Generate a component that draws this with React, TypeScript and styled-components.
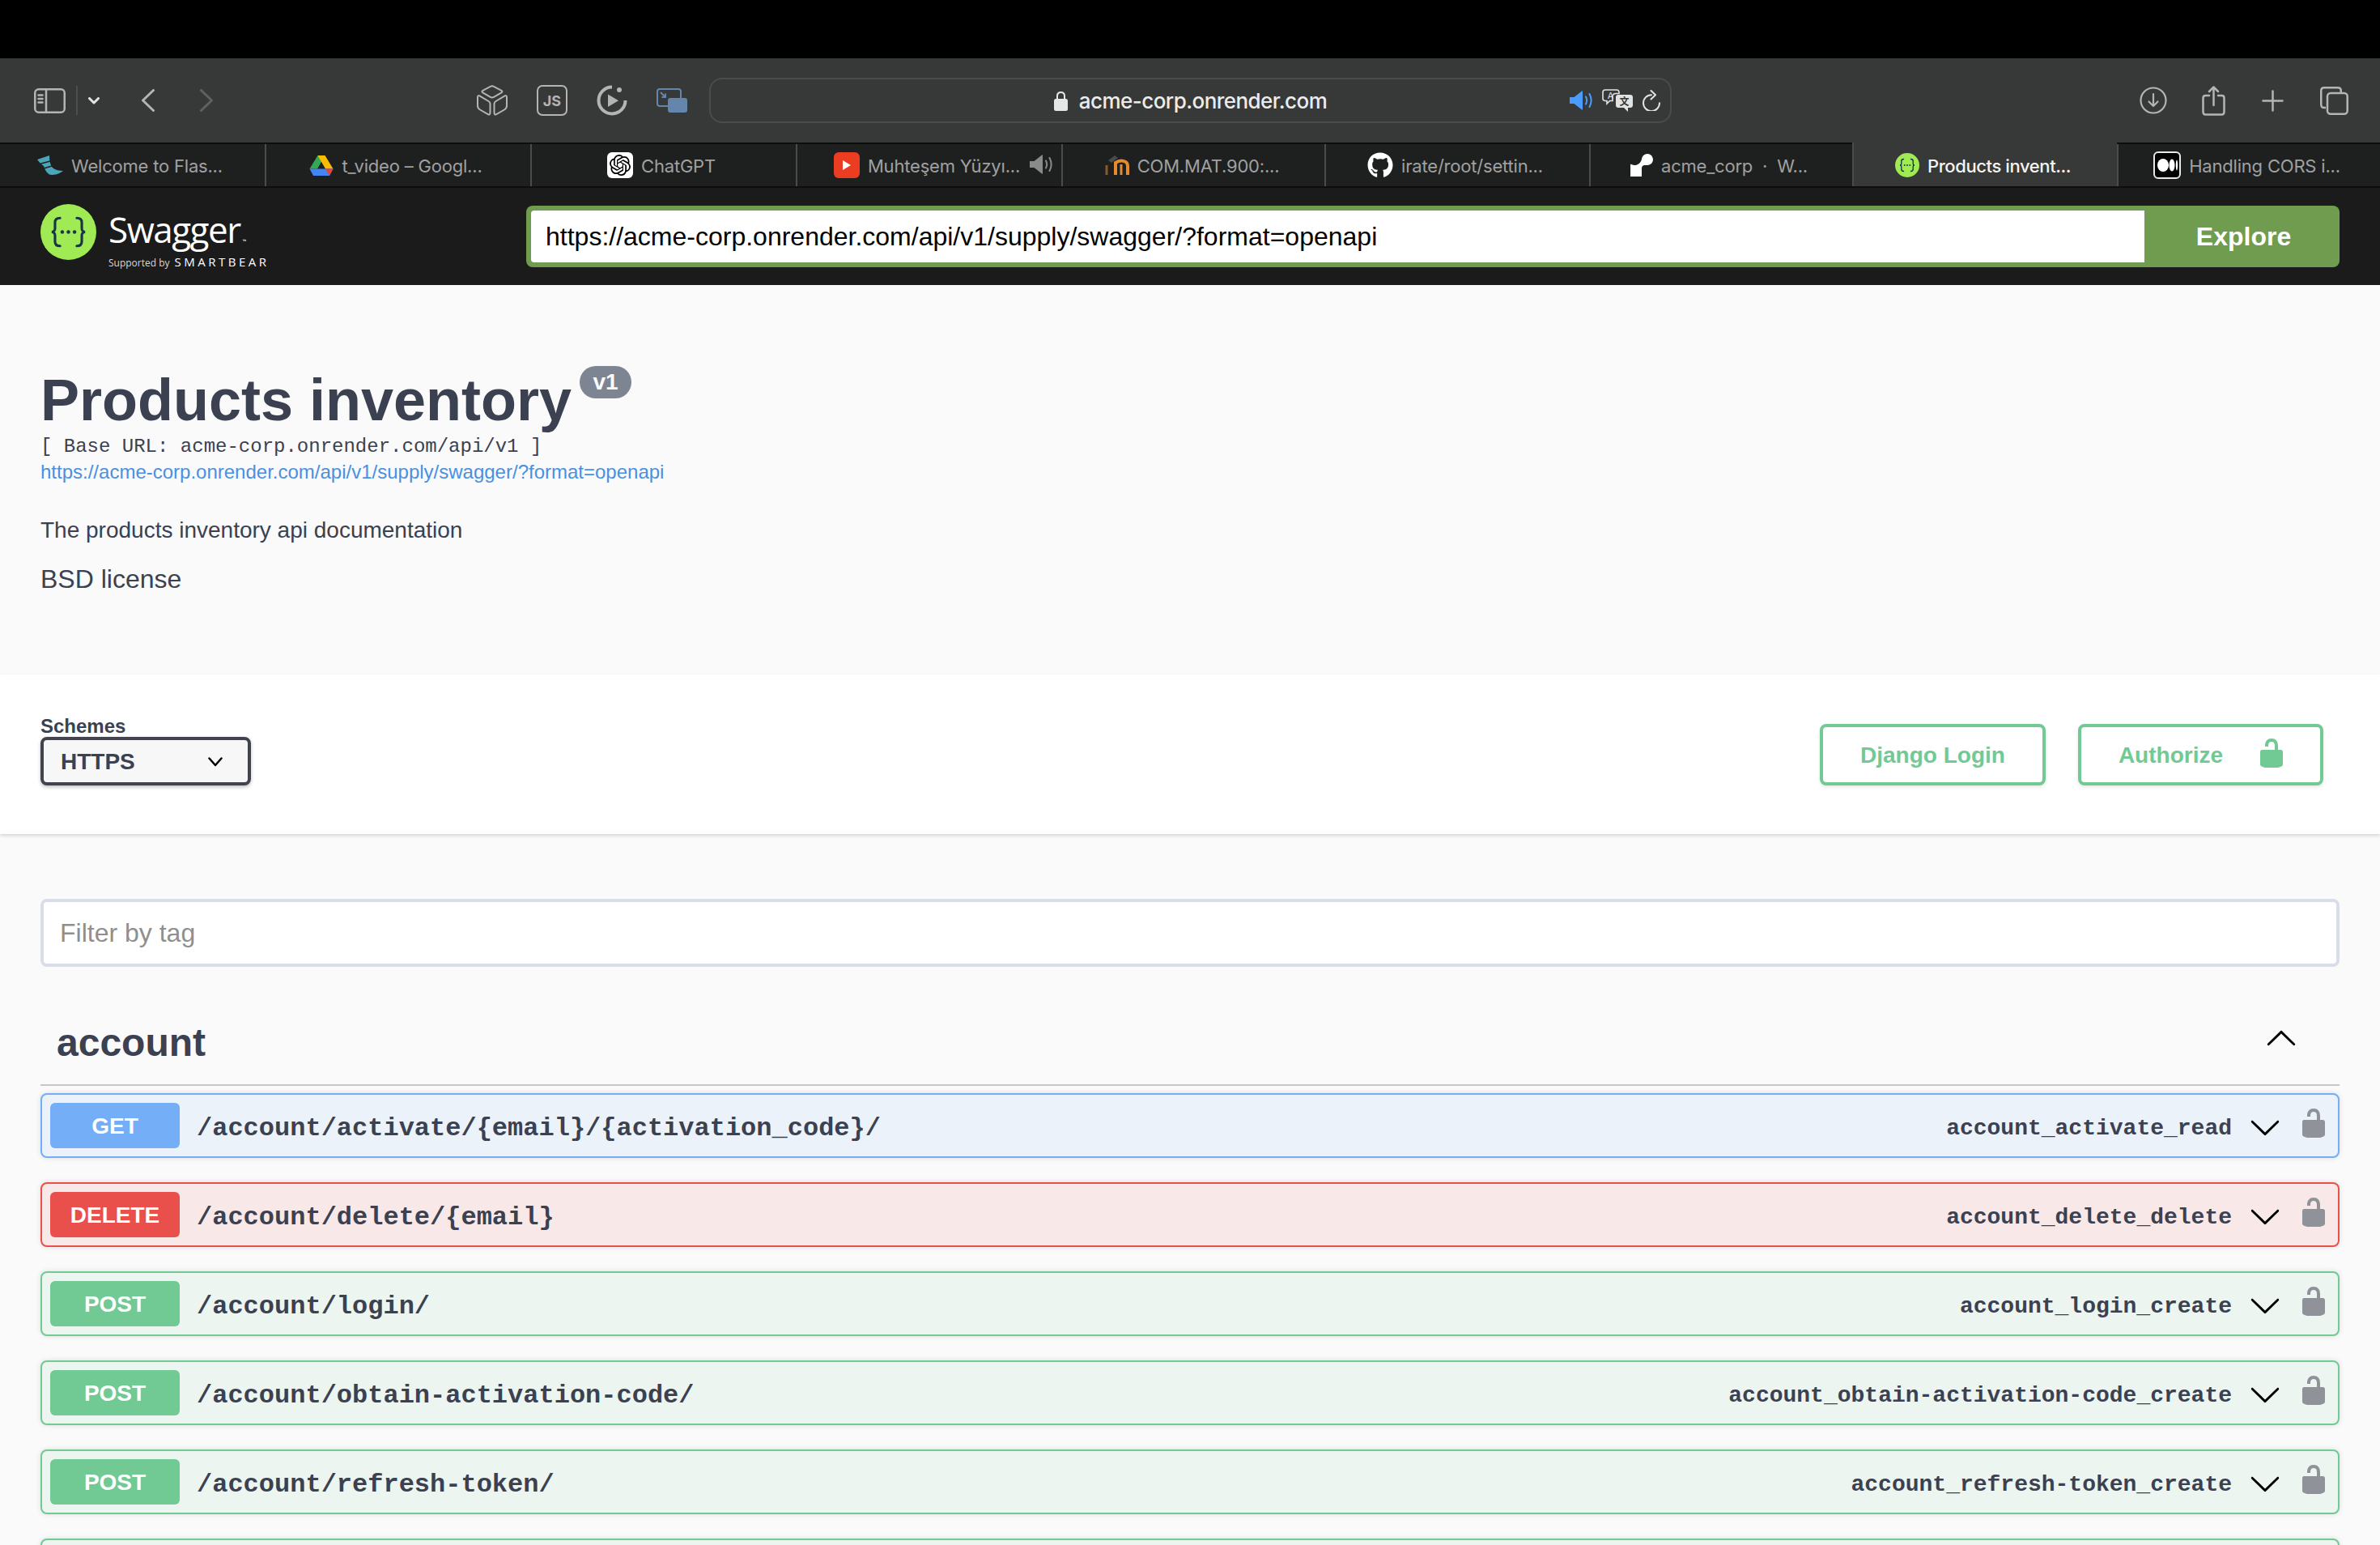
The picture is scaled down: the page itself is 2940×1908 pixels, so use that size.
import React from "react";
import styled, { createGlobalStyle } from "styled-components";
import { FaGithub } from "react-icons/fa";
import { SiOpenai, SiRender } from "react-icons/si";

const GlobalStyle = createGlobalStyle`
  html, body {
    margin: 0;
    padding: 0;
    background: #000;
  }
  * {
    box-sizing: border-box;
  }
`;

const Page = styled.div`
  width: 2940px;
  height: 1908px;
  overflow: hidden;
  display: flex;
  flex-direction: column;
  background: #fafafa;
  font-family: "Liberation Sans", Arial, sans-serif;
  color: #3b4151;
`;

const BlackBar = styled.div`
  height: 72px;
  flex: none;
  background: #000;
`;

const Toolbar = styled.div`
  height: 104px;
  flex: none;
  display: flex;
  align-items: center;
  padding: 0 39px 0 42px;
  background: #373938;
`;

const SideGroup = styled.div`
  display: flex;
  align-items: center;
  svg {
    display: block;
    flex: none;
  }
`;

const ToolDivider = styled.div`
  width: 2px;
  height: 36px;
  margin: 0 13px;
  background: #4d4f4e;
`;

const NavSlot = styled.span<{ $gap: number }>`
  margin-left: ${(p) => p.$gap}px;
`;

const ExtGroup = styled.div`
  display: flex;
  align-items: center;
  gap: 36px;
  margin-left: 326px;
  svg {
    display: block;
    flex: none;
  }
`;

const AddressBar = styled.div`
  width: 1189px;
  height: 56px;
  margin-left: 27px;
  display: grid;
  grid-template-columns: 1fr auto 1fr;
  align-items: center;
  padding: 0 11px;
  border: 2px solid #4a4c4b;
  border-radius: 16px;
`;

const AddressCenter = styled.div`
  grid-column: 2;
  display: flex;
  align-items: center;
  gap: 14px;
  font-family: Inter, "Liberation Sans", sans-serif;
  font-size: 26px;
  font-weight: 500;
  letter-spacing: -0.55px;
  color: #ececec;
`;

const AddressActions = styled.div`
  grid-column: 3;
  justify-self: end;
  display: flex;
  align-items: center;
  gap: 12px;
  svg {
    display: block;
  }
`;

const RightGroup = styled.div`
  margin-left: auto;
  display: flex;
  align-items: center;
  gap: 45px;
  svg {
    display: block;
    flex: none;
  }
  svg:first-child {
    margin-right: -2px;
  }
`;

const TabStrip = styled.div`
  height: 56px;
  flex: none;
  display: flex;
  background: #1e2020;
  border-top: 2px solid #0d0d0d;
  border-bottom: 2px solid #0d0d0d;
`;

const Tab = styled.div<{ $width: number; $active?: boolean }>`
  width: ${(p) => p.$width}px;
  flex: none;
  position: relative;
  display: flex;
  align-items: center;
  justify-content: center;
  gap: 10px;
  margin-top: ${(p) => (p.$active ? "-2px" : "0")};
  padding: ${(p) => (p.$active ? "4px" : "2px")} 6px 0 0;
  background: ${(p) => (p.$active ? "#373938" : "transparent")};
  border-left: 2px solid #4a4c4b;
  color: ${(p) => (p.$active ? "#f4f4f4" : "#a0a0a0")};
  font-family: Inter, "Liberation Sans", sans-serif;
  font-size: 22px;
  letter-spacing: ${(p) => (p.$active ? "-0.4px" : "-0.2px")};
  font-weight: ${(p) => (p.$active ? 500 : 400)};
  white-space: nowrap;
  &:first-child {
    border-left: 0;
  }
  svg {
    display: block;
    flex: none;
    margin-top: -2px;
  }
`;

const TabAudio = styled.span`
  position: absolute;
  right: 11px;
  top: 15px;
`;

const FaviconTile = styled.span<{ $bg: string; $fg: string }>`
  width: 32px;
  height: 32px;
  flex: none;
  display: flex;
  align-items: center;
  justify-content: center;
  margin-top: -2px;
  border-radius: 6px;
  background: ${(p) => p.$bg};
  color: ${(p) => p.$fg};
  svg {
    margin-top: 0;
  }
`;

const SwaggerBar = styled.header`
  height: 120px;
  flex: none;
  display: flex;
  align-items: center;
  padding: 0 50px;
  background: #1b1b1b;
`;

const Brand = styled.div`
  width: 600px;
  flex: none;
  align-self: flex-start;
  padding-top: 20px;
  display: flex;
  align-items: flex-start;
  gap: 15px;
  color: #fff;
  svg {
    display: block;
  }
`;

const BrandText = styled.div`
  display: flex;
  flex-direction: column;
  margin-top: 6px;
`;

const Wordmark = styled.div`
  font-family: "Open Sans", sans-serif;
  font-size: 44px;
  font-weight: 400;
  line-height: 50px;
  letter-spacing: -1.5px;
  sup {
    font-size: 6px;
    letter-spacing: 0;
    vertical-align: 0;
    margin-left: 3px;
  }
`;

const Supported = styled.div`
  display: flex;
  align-items: baseline;
  gap: 6px;
  margin-top: -9px;
  font-family: "Open Sans", sans-serif;
  font-size: 12px;
  line-height: 18px;
  color: #d8d8d8;
  b {
    font-size: 15px;
    font-weight: 500;
    letter-spacing: 3.5px;
    color: #fff;
  }
`;

const ExploreForm = styled.div`
  flex: 1;
  height: 76px;
  display: flex;
  border-radius: 8px;
  overflow: hidden;
  background: #6f9c4e;
`;

const UrlField = styled.div`
  flex: 1;
  margin: 6px 0 6px 6px;
  padding: 0 18px;
  display: flex;
  align-items: center;
  background: #fff;
  color: #000;
  font-size: 32px;
  border-radius: 4px 0 0 4px;
`;

const ExploreButton = styled.div`
  width: 241px;
  padding-left: 4px;
  display: flex;
  align-items: center;
  justify-content: center;
  color: #fff;
  font-size: 32px;
  font-weight: 700;
`;

const InfoSection = styled.section`
  height: 481px;
  flex: none;
  padding: 100px 50px 0;
`;

const TitleRow = styled.div`
  display: flex;
  align-items: flex-start;
  height: 80px;
`;

const Title = styled.h1`
  margin: 2px 0 0;
  font-size: 72px;
  line-height: 80px;
  font-weight: 700;
  color: #3b4151;
`;

const VersionBadge = styled.span`
  width: 64px;
  height: 40px;
  margin-left: 10px;
  display: flex;
  align-items: center;
  justify-content: center;
  border-radius: 20px;
  background: #7d8492;
  color: #fafafa;
  font-size: 28px;
  font-weight: 700;
`;

const BaseUrl = styled.div`
  margin-top: 4px;
  font-family: "Liberation Mono", monospace;
  font-size: 24px;
  line-height: 32px;
  color: #3b4151;
`;

const SpecLink = styled.div`
  margin-top: -1px;
  font-size: 24px;
  line-height: 31px;
  color: #4990e2;
`;

const Description = styled.p`
  margin: 37px 0 0;
  font-size: 28px;
  line-height: 40px;
`;

const License = styled.p`
  margin: 20px 0 0;
  font-size: 32px;
  line-height: 40px;
`;

const SchemeBar = styled.section`
  height: 197px;
  flex: none;
  position: relative;
  display: flex;
  justify-content: space-between;
  padding: 49px 70px 0 50px;
  background: #fff;
  box-shadow: 0 2px 4px 0 rgba(0, 0, 0, 0.15);
`;

const SchemeLabel = styled.div`
  padding-top: 1px;
  font-size: 24px;
  line-height: 27px;
  font-weight: 700;
`;

const SchemeSelect = styled.div`
  width: 260px;
  height: 60px;
  display: flex;
  align-items: center;
  justify-content: space-between;
  padding: 2px 31px 0 21px;
  border: 4px solid #41444e;
  border-radius: 8px;
  background: #f7f7f7;
  box-shadow: 0 2px 4px 0 rgba(0, 0, 0, 0.25);
  font-size: 28px;
  font-weight: 700;
`;

const AuthGroup = styled.div`
  display: flex;
  gap: 40px;
  padding-top: 12px;
  align-items: flex-start;
`;

const AuthButton = styled.div<{ $icon?: boolean }>`
  height: 76px;
  display: flex;
  align-items: center;
  gap: 40px;
  padding: ${(p) => (p.$icon ? "2px 40px 0 46px" : "2px 46px 0")};
  border: 4px solid #71c994;
  border-radius: 8px;
  background: #fff;
  box-shadow: 0 2px 4px 0 rgba(0, 0, 0, 0.1);
  color: #71c994;
  font-size: 28px;
  font-weight: 700;
  svg {
    display: block;
    margin-top: -6px;
  }
`;

const Content = styled.main`
  flex: 1;
  padding: 80px 50px 0;
`;

const FilterBox = styled.div`
  height: 84px;
  display: flex;
  align-items: center;
  padding: 0 20px;
  border: 4px solid #d8dde7;
  border-radius: 8px;
  background: #fff;
  color: #8f8f8f;
  font-size: 32px;
`;

const TagHeader = styled.div`
  height: 147px;
  margin-bottom: 9px;
  display: flex;
  align-items: center;
  justify-content: space-between;
  padding: 41px 52px 0 20px;
  border-bottom: 2px solid #c6c7cc;
  h3 {
    margin: 0;
    font-size: 48px;
    font-weight: 700;
    color: #3b4151;
  }
  svg {
    display: block;
    margin-top: -13px;
  }
`;

type Method = "GET" | "DELETE" | "POST";

const methodColours: Record<Method, { line: string; tint: string }> = {
  GET: { line: "#73aef7", tint: "#ebf2fa" },
  DELETE: { line: "#e9504b", tint: "#f9e8e8" },
  POST: { line: "#71c994", tint: "#ecf5f0" },
};

const OpRow = styled.div<{ $method: Method }>`
  height: 80px;
  margin-bottom: 30px;
  display: flex;
  align-items: center;
  padding: 0 10px;
  border: 2px solid ${(p) => methodColours[p.$method].line};
  border-radius: 8px;
  background: ${(p) => methodColours[p.$method].tint};
  box-shadow: 0 0 6px rgba(0, 0, 0, 0.12);
`;

const MethodBadge = styled.span<{ $method: Method }>`
  width: 160px;
  height: 56px;
  flex: none;
  display: flex;
  align-items: center;
  justify-content: center;
  padding-top: 2px;
  border-radius: 6px;
  background: ${(p) => methodColours[p.$method].line};
  color: #fff;
  font-size: 28px;
  font-weight: 700;
`;

const OpPath = styled.span`
  margin-left: 21px;
  padding-top: 6px;
  font-family: "Liberation Mono", monospace;
  font-size: 32px;
  font-weight: 700;
  color: #3b4151;
`;

const OpId = styled.span`
  margin-left: auto;
  padding-top: 7px;
  font-family: "Liberation Mono", monospace;
  font-size: 28px;
  font-weight: 700;
  color: #3b4151;
`;

const OpChevron = styled.span`
  margin-left: 21px;
  padding-top: 3px;
  svg {
    display: block;
  }
`;

const OpLock = styled.span`
  margin-left: 20px;
  margin-bottom: 7px;
  svg {
    display: block;
  }
`;

const LOCK_PATH =
  "M15.8 8H14V5.6C14 2.703 12.665 1 10 1 7.334 1 6 2.703 6 5.6V6h2v-.801C8 3.754 8.797 3 10 3c1.203 0 2 .754 2 2.199V8H4c-.553 0-1 .646-1 1.199V17c0 .549.428 1.139.951 1.307l1.197.387C5.672 18.861 6.55 19 7.1 19h5.8c.549 0 1.428-.139 1.951-.307l1.196-.387c.524-.167.953-.757.953-1.306V9.199C17 8.646 16.352 8 15.8 8z";
const ARROW_PATH =
  "M17.418 6.109c.272-.268.709-.268.979 0s.271.701 0 .969l-7.908 7.83c-.27.268-.707.268-.979 0l-7.908-7.83c-.27-.268-.27-.701 0-.969.271-.268.709-.268.979 0L10 13.25l7.418-7.141z";

const LockIcon = ({ color }: { color: string }) => (
  <svg width="40" height="40" viewBox="0 0 20 20" fill={color}>
    <path d={LOCK_PATH} />
  </svg>
);

const ArrowIcon = ({ up }: { up?: boolean }) => (
  <svg width="40" height="40" viewBox="0 0 20 20" fill="#000">
    <path d={ARROW_PATH} transform={up ? "rotate(180 10 10.5)" : undefined} />
  </svg>
);

const SwaggerLogo = ({ size }: { size: number }) => (
  <svg width={size} height={size} viewBox="0 0 100 100">
    <circle cx="50" cy="50" r="50" fill="#a0ea53" />
    <g fill="none" stroke="#163645" strokeWidth="4.5" strokeLinecap="round">
      <path d="M35 25c-7 0-9 3-9 8v11c0 3-2 6-6 6 4 0 6 3 6 6v11c0 5 2 8 9 8" />
      <path d="M65 25c7 0 9 3 9 8v11c0 3 2 6 6 6-4 0-6 3-6 6v11c0 5-2 8-9 8" />
    </g>
    <g fill="#163645">
      <circle cx="39" cy="50" r="3.2" />
      <circle cx="50" cy="50" r="3.2" />
      <circle cx="61" cy="50" r="3.2" />
    </g>
  </svg>
);

const TOOL = "#b4b4b4";

const SidebarIcon = () => (
  <svg width="39" height="31" viewBox="0 0 39 31" fill="none" stroke={TOOL} strokeWidth="2.5">
    <rect x="1.25" y="1.25" width="36.5" height="28.5" rx="4.5" />
    <path d="M15 1.25v28.5" />
    <path d="M5.5 8.5h5M5.5 13h5M5.5 17.5h5" strokeLinecap="round" />
  </svg>
);

const SmallChevron = () => (
  <svg width="14" height="9" viewBox="0 0 14 9" fill="none" stroke="#e4e4e4" strokeWidth="3" strokeLinecap="round" strokeLinejoin="round">
    <path d="M1.5 1.5 7 7l5.5-5.5" />
  </svg>
);

const NavChevron = ({ flip, color }: { flip?: boolean; color: string }) => (
  <svg width="16" height="28" viewBox="0 0 16 28" fill="none" stroke={color} strokeWidth="3" strokeLinecap="round" strokeLinejoin="round">
    <path d={flip ? "M1.5 1.5 14.5 14 1.5 26.5" : "M14.5 1.5 1.5 14l13 12.5"} />
  </svg>
);

const CubeIcon = () => (
  <svg width="38" height="38" viewBox="0 0 38 38" fill="none" stroke={TOOL} strokeWidth="2" strokeLinejoin="round">
    <path d="M16.8 1.8c1.200-.7 3-.7 4.200 0l9.500 5c1.200.7 1.200 1.800 0 2.500l-9.500 5.500c-1.200.7-3 .7-4.200 0L7.300 9.300c-1.200-.7-1.200-1.800 0-2.500z" />
    <path d="M1 15c0-1.700 1.200-2.400 2.400-1.700L14.500 20c1.200.7 2 1.900 2 3.300V34.500c0 1.700-1.300 2.500-2.700 1.700L4 30.500C2 29.300 1 27.600 1 25.500z" />
    <path d="M37 15c0-1.700-1.200-2.400-2.400-1.700L23.500 20c-1.200.7-2 1.900-2 3.300V34.500c0 1.700 1.300 2.500 2.700 1.700L34 30.500c2-1.200 3-2.900 3-5z" />
  </svg>
);

const JsIcon = () => (
  <svg width="38" height="38" viewBox="0 0 38 38">
    <rect x="1" y="1" width="36" height="36" rx="6" fill="none" stroke={TOOL} strokeWidth="2" />
    <text x="19" y="25.500" textAnchor="middle" fontFamily="Inter, sans-serif" fontWeight="700" fontSize="18" fill={TOOL}>
      JS
    </text>
  </svg>
);

const ReplayIcon = () => (
  <svg width="38" height="38" viewBox="0 0 38 38">
    <path d="M19 2.500A16.500 16.500 0 1 0 35.500 19" fill="none" stroke={TOOL} strokeWidth="4" />
    <path d="M14 11.500v15.500l13-7.750z" fill={TOOL} />
    <circle cx="28" cy="6" r="3" fill={TOOL} />
  </svg>
);

const PipIcon = () => (
  <svg width="38" height="30" viewBox="0 0 38 30">
    <rect x="1" y="1" width="29" height="21" rx="3" fill="none" stroke="#6486ad" strokeWidth="2" />
    <path d="M5 5l6 6M11 6.500V11H6.500" fill="none" stroke="#6486ad" strokeWidth="2" />
    <rect x="14" y="12" width="24" height="18" rx="3" fill="#6486ad" />
  </svg>
);

const SpeakerIcon = ({ color }: { color: string }) => (
  <svg width="28" height="24" viewBox="0 0 28 24" fill="none">
    <path d="M0 8h5.500L15 .5c.6-.4 1-.2 1 .5v22c0 .7-.4.9-1 .5L5.500 16H0z" fill={color} />
    <path d="M20 7.500c1.500 2.800 1.500 6.200 0 9M24.500 4c2.700 5 2.700 11 0 16" stroke={color} strokeWidth="2" strokeLinecap="round" />
  </svg>
);

const TranslateIcon = () => (
  <svg width="38" height="28" viewBox="0 0 38 28">
    <path d="M4 1h14c1.700 0 3 1.300 3 3v1.500H17c-3 0-4 2-4 4v5H9.500L6 18v-3.500H4c-1.700 0-3-1.300-3-3V4c0-1.700 1.300-3 3-3z" fill="none" stroke="#e2e2e2" strokeWidth="1.600" />
    <text x="10.500" y="12" textAnchor="middle" fontFamily="Inter, sans-serif" fontSize="11" fill="#e2e2e2">
      A
    </text>
    <path d="M20 7h15c1.700 0 3 1.300 3 3v10c0 1.700-1.300 3-3 3h-3v5l-5-5h-7c-1.700 0-3-1.300-3-3V10c0-1.700 1.300-3 3-3z" fill="#e2e2e2" />
    <text x="27.500" y="20" textAnchor="middle" fontFamily="Noto Sans CJK SC, sans-serif" fontSize="12" fontWeight="700" fill="#373938">
      文
    </text>
  </svg>
);

const ReloadIcon = () => (
  <svg width="23" height="26" viewBox="0 0 23 26" fill="none" stroke="#e2e2e2" strokeWidth="2" strokeLinecap="round" strokeLinejoin="round">
    <path d="M11 6.200A10 10 0 1 0 21 16.200" />
    <path d="M10.500 1l5.500 5.200-5.500 5.300" />
  </svg>
);

const PadlockGlyph = () => (
  <svg width="17" height="25" viewBox="0 0 17 25">
    <path d="M4 11V6.500C4 3.500 5.800 2 8.500 2S13 3.500 13 6.500V11" fill="none" stroke="#e6e6e6" strokeWidth="2" />
    <rect x="0" y="10" width="17" height="15" rx="2.500" fill="#e6e6e6" />
  </svg>
);

const DownloadIcon = () => (
  <svg width="34" height="34" viewBox="0 0 34 34" fill="none" stroke={TOOL} strokeWidth="2.200" strokeLinecap="round" strokeLinejoin="round">
    <circle cx="17" cy="17" r="15.500" />
    <path d="M17 9v15M11.500 18.500 17 24l5.500-5.500" />
  </svg>
);

const ShareIcon = () => (
  <svg width="29" height="37" viewBox="0 0 29 37" fill="none" stroke={TOOL} strokeWidth="2.500" strokeLinecap="round" strokeLinejoin="round">
    <path d="M9 12H4.500C2.500 12 1.500 13 1.500 15v17c0 2 1 3.500 3 3.500h20c2 0 3-1.500 3-3.500V15c0-2-1-3-3-3H20" />
    <path d="M14.500 24V2M9 7l5.500-5.500L20 7" />
  </svg>
);

const PlusIcon = () => (
  <svg width="27" height="27" viewBox="0 0 27 27" fill="none" stroke={TOOL} strokeWidth="2.500" strokeLinecap="round">
    <path d="M13.500 1.500v24M1.500 13.500h24" />
  </svg>
);

const TabsIcon = () => (
  <svg width="35" height="35" viewBox="0 0 35 35" fill="none" stroke={TOOL} strokeWidth="2.500">
    <path d="M7 26H5c-2.200 0-3.750-1.500-3.750-3.750V5C1.250 2.800 2.800 1.250 5 1.250h17c2.200 0 3.750 1.500 3.750 3.750v3" />
    <rect x="9" y="8" width="24.750" height="25.750" rx="4" />
  </svg>
);

const FlaskFavicon = () => (
  <svg width="32" height="24" viewBox="0 0 32 24">
    <path d="M0 5 15 0c0 6 1 13 5 16 3 2 7 3 12 3l-3 2c-3 2-7 3-11 3-5 0-8-5-10-11L4 10z" fill="#4aa6b8" />
    <path d="M3 10.500 16 7M6.500 16.500 18 13" stroke="#1e2020" strokeWidth="1.600" />
  </svg>
);

const DriveFavicon = () => (
  <svg width="30" height="27" viewBox="0 0 30 27" strokeLinejoin="round">
    <path d="M10.500 1h9L10 17.500H0.500z" fill="#34a853" />
    <path d="M19.500 1l10 16.500H20L10.500 1z" fill="#fbbc04" />
    <path d="M0.500 17.500H29.500L25 26H5z" fill="#4285f4" />
    <path d="M20 17.500h9.500L25 26z" fill="#ea4335" />
  </svg>
);

const YoutubeFavicon = () => (
  <FaviconTile $bg="#ec3c22" $fg="#fff">
    <svg width="12" height="14" viewBox="0 0 12 14" fill="currentColor">
      <path d="M1 1l10 6-10 6z" />
    </svg>
  </FaviconTile>
);

const MoodleFavicon = () => (
  <svg width="32" height="24" viewBox="0 0 32 24" fill="none">
    <path d="M4 24V12" stroke="#8a5a28" strokeWidth="3" />
    <path d="M15 24V9c6-4 15-3 15 4v11" stroke="#e88a2c" strokeWidth="4" />
    <path d="M22 24V11" stroke="#e88a2c" strokeWidth="3" />
    <path d="M6 6 14 0l4 3-8 6z" fill="#4a4a4a" />
  </svg>
);

const MediumFavicon = () => (
  <svg width="34" height="34" viewBox="0 0 34 34">
    <rect x="1" y="1" width="32" height="32" rx="5" fill="#000" stroke="#e8e8e8" strokeWidth="2" />
    <ellipse cx="12" cy="17" rx="7" ry="8" fill="#fff" />
    <ellipse cx="23" cy="17" rx="3.500" ry="7.500" fill="#fff" />
    <ellipse cx="29" cy="17" rx="1.200" ry="6.500" fill="#fff" />
  </svg>
);

type Operation = { method: Method; path: string; id: string };

const operations: Operation[] = [
  { method: "GET", path: "/account/activate/{email}/{activation_code}/", id: "account_activate_read" },
  { method: "DELETE", path: "/account/delete/{email}", id: "account_delete_delete" },
  { method: "POST", path: "/account/login/", id: "account_login_create" },
  { method: "POST", path: "/account/obtain-activation-code/", id: "account_obtain-activation-code_create" },
  { method: "POST", path: "/account/refresh-token/", id: "account_refresh-token_create" },
];

const SPEC_URL = "https://acme-corp.onrender.com/api/v1/supply/swagger/?format=openapi";

export default function App() {
  return (
    <Page>
      <GlobalStyle />
      <BlackBar />
      <Toolbar>
        <SideGroup>
          <SidebarIcon />
          <ToolDivider />
          <SmallChevron />
          <NavSlot $gap={52}>
            <NavChevron color="#b4b4b4" />
          </NavSlot>
          <NavSlot $gap={56}>
            <NavChevron flip color="#606261" />
          </NavSlot>
        </SideGroup>
        <ExtGroup>
          <CubeIcon />
          <JsIcon />
          <ReplayIcon />
          <PipIcon />
        </ExtGroup>
        <AddressBar>
          <AddressCenter>
            <PadlockGlyph />
            acme-corp.onrender.com
          </AddressCenter>
          <AddressActions>
            <SpeakerIcon color="#4a9cff" />
            <TranslateIcon />
            <ReloadIcon />
          </AddressActions>
        </AddressBar>
        <RightGroup>
          <DownloadIcon />
          <ShareIcon />
          <PlusIcon />
          <TabsIcon />
        </RightGroup>
      </Toolbar>
      <TabStrip>
        <Tab $width={327}>
          <FlaskFavicon />
          Welcome to Flas...
        </Tab>
        <Tab $width={328}>
          <DriveFavicon />
          t_video – Googl...
        </Tab>
        <Tab $width={328}>
          <FaviconTile $bg="#fff" $fg="#000">
            <SiOpenai size={26} />
          </FaviconTile>
          ChatGPT
        </Tab>
        <Tab $width={328}>
          <YoutubeFavicon />
          Muhteşem Yüzyı...
          <TabAudio>
            <SpeakerIcon color="#8a8a8a" />
          </TabAudio>
        </Tab>
        <Tab $width={325}>
          <MoodleFavicon />
          COM.MAT.900:...
        </Tab>
        <Tab $width={327}>
          <FaGithub size={32} color="#fff" />
          irate/root/settin...
        </Tab>
        <Tab $width={325}>
          <SiRender size={28} color="#fff" />
          {"acme_corp\u00a0\u00a0·\u00a0\u00a0W..."}
        </Tab>
        <Tab $width={327} $active>
          <SwaggerLogo size={30} />
          Products invent...
        </Tab>
        <Tab $width={325}>
          <MediumFavicon />
          Handling CORS i...
        </Tab>
      </TabStrip>
      <SwaggerBar>
        <Brand>
          <SwaggerLogo size={69} />
          <BrandText>
            <Wordmark>
              Swagger<sup>™</sup>
            </Wordmark>
            <Supported>
              Supported by <b>SMARTBEAR</b>
            </Supported>
          </BrandText>
        </Brand>
        <ExploreForm>
          <UrlField>{SPEC_URL}</UrlField>
          <ExploreButton>Explore</ExploreButton>
        </ExploreForm>
      </SwaggerBar>
      <InfoSection>
        <TitleRow>
          <Title>Products inventory</Title>
          <VersionBadge>v1</VersionBadge>
        </TitleRow>
        <BaseUrl>[ Base URL: acme-corp.onrender.com/api/v1 ]</BaseUrl>
        <SpecLink>{SPEC_URL}</SpecLink>
        <Description>The products inventory api documentation</Description>
        <License>BSD license</License>
      </InfoSection>
      <SchemeBar>
        <div>
          <SchemeLabel>Schemes</SchemeLabel>
          <SchemeSelect>
            HTTPS
            <svg width="18" height="12" viewBox="0 0 18 12" fill="none" stroke="#000" strokeWidth="2.500" strokeLinecap="round" strokeLinejoin="round">
              <path d="M1.500 1.500 9 10l7.500-8.500" />
            </svg>
          </SchemeSelect>
        </div>
        <AuthGroup>
          <AuthButton>Django Login</AuthButton>
          <AuthButton $icon>
            Authorize
            <LockIcon color="#71c994" />
          </AuthButton>
        </AuthGroup>
      </SchemeBar>
      <Content>
        <FilterBox>Filter by tag</FilterBox>
        <TagHeader>
          <h3>account</h3>
          <ArrowIcon up />
        </TagHeader>
        {operations.map((op) => (
          <OpRow key={op.path} $method={op.method}>
            <MethodBadge $method={op.method}>{op.method}</MethodBadge>
            <OpPath>{op.path}</OpPath>
            <OpId>{op.id}</OpId>
            <OpChevron>
              <ArrowIcon />
            </OpChevron>
            <OpLock>
              <LockIcon color="#8f9299" />
            </OpLock>
          </OpRow>
        ))}
        <OpRow $method="POST" />
      </Content>
    </Page>
  );
}
